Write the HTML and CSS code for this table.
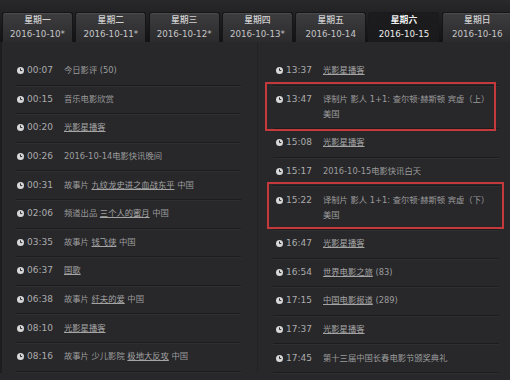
FILE: index.html
```html
<!DOCTYPE html>
<html>
<head>
<meta charset="utf-8">
<link rel="stylesheet" href="styles.css">
</head>
<body>
<div class="page">
  <div class="tabs">
    <div class="tab"><span class="wd">星期一</span><span class="dt">2016-10-10*</span></div>
    <div class="tab"><span class="wd">星期二</span><span class="dt">2016-10-11*</span></div>
    <div class="tab"><span class="wd">星期三</span><span class="dt">2016-10-12*</span></div>
    <div class="tab"><span class="wd">星期四</span><span class="dt">2016-10-13*</span></div>
    <div class="tab"><span class="wd">星期五</span><span class="dt">2016-10-14</span></div>
    <div class="tab active"><span class="wd">星期六</span><span class="dt">2016-10-15</span></div>
    <div class="tab"><span class="wd">星期日</span><span class="dt">2016-10-16</span></div>
  </div>
  <div class="content">
    <div class="col left">
      <div class="row"><svg class="ico" viewBox="0 0 7 7"><circle cx="3.5" cy="3.5" r="3.5"/><path d="M3.5 1.4V3.6H5.3"/></svg><span class="time">00:07</span><span class="title">今日影评 (50)</span></div>
      <div class="row"><svg class="ico" viewBox="0 0 7 7"><circle cx="3.5" cy="3.5" r="3.5"/><path d="M3.5 1.4V3.6H5.3"/></svg><span class="time">00:15</span><span class="title">音乐电影欣赏</span></div>
      <div class="row"><svg class="ico" viewBox="0 0 7 7"><circle cx="3.5" cy="3.5" r="3.5"/><path d="M3.5 1.4V3.6H5.3"/></svg><span class="time">00:20</span><span class="title"><a class="lk">光影星播客</a></span></div>
      <div class="row"><svg class="ico" viewBox="0 0 7 7"><circle cx="3.5" cy="3.5" r="3.5"/><path d="M3.5 1.4V3.6H5.3"/></svg><span class="time">00:26</span><span class="title">2016-10-14电影快讯晚间</span></div>
      <div class="row"><svg class="ico" viewBox="0 0 7 7"><circle cx="3.5" cy="3.5" r="3.5"/><path d="M3.5 1.4V3.6H5.3"/></svg><span class="time">00:31</span><span class="title">故事片 <a class="lk">九纹龙史进之血战东平</a> 中国</span></div>
      <div class="row"><svg class="ico" viewBox="0 0 7 7"><circle cx="3.5" cy="3.5" r="3.5"/><path d="M3.5 1.4V3.6H5.3"/></svg><span class="time">02:06</span><span class="title">频道出品 <a class="lk">三个人的蜜月</a> 中国</span></div>
      <div class="row"><svg class="ico" viewBox="0 0 7 7"><circle cx="3.5" cy="3.5" r="3.5"/><path d="M3.5 1.4V3.6H5.3"/></svg><span class="time">03:35</span><span class="title">故事片 <a class="lk">钱飞侠</a> 中国</span></div>
      <div class="row"><svg class="ico" viewBox="0 0 7 7"><circle cx="3.5" cy="3.5" r="3.5"/><path d="M3.5 1.4V3.6H5.3"/></svg><span class="time">06:37</span><span class="title"><a class="lk">国歌</a></span></div>
      <div class="row"><svg class="ico" viewBox="0 0 7 7"><circle cx="3.5" cy="3.5" r="3.5"/><path d="M3.5 1.4V3.6H5.3"/></svg><span class="time">06:38</span><span class="title">故事片 <a class="lk">纤夫的爱</a> 中国</span></div>
      <div class="row"><svg class="ico" viewBox="0 0 7 7"><circle cx="3.5" cy="3.5" r="3.5"/><path d="M3.5 1.4V3.6H5.3"/></svg><span class="time">08:10</span><span class="title"><a class="lk">光影星播客</a></span></div>
      <div class="row"><svg class="ico" viewBox="0 0 7 7"><circle cx="3.5" cy="3.5" r="3.5"/><path d="M3.5 1.4V3.6H5.3"/></svg><span class="time">08:16</span><span class="title">故事片 少儿影院 <a class="lk">极地大反攻</a> 中国</span></div>
    </div>
    <div class="col right">
      <div class="row"><svg class="ico" viewBox="0 0 7 7"><circle cx="3.5" cy="3.5" r="3.5"/><path d="M3.5 1.4V3.6H5.3"/></svg><span class="time">13:37</span><span class="title"><a class="lk">光影星播客</a></span></div>
      <div class="row"><svg class="ico" viewBox="0 0 7 7"><circle cx="3.5" cy="3.5" r="3.5"/><path d="M3.5 1.4V3.6H5.3"/></svg><span class="time">13:47</span><span class="title">译制片 影人 1+1: 查尔顿·赫斯顿 宾虚（上）<br>美国</span><span class="mark mark1"></span></div>
      <div class="row"><svg class="ico" viewBox="0 0 7 7"><circle cx="3.5" cy="3.5" r="3.5"/><path d="M3.5 1.4V3.6H5.3"/></svg><span class="time">15:08</span><span class="title"><a class="lk">光影星播客</a></span></div>
      <div class="row"><svg class="ico" viewBox="0 0 7 7"><circle cx="3.5" cy="3.5" r="3.5"/><path d="M3.5 1.4V3.6H5.3"/></svg><span class="time">15:17</span><span class="title">2016-10-15电影快讯白天</span></div>
      <div class="row"><svg class="ico" viewBox="0 0 7 7"><circle cx="3.5" cy="3.5" r="3.5"/><path d="M3.5 1.4V3.6H5.3"/></svg><span class="time">15:22</span><span class="title">译制片 影人 1+1: 查尔顿·赫斯顿 宾虚（下）<br>美国</span><span class="mark mark2"></span></div>
      <div class="row"><svg class="ico" viewBox="0 0 7 7"><circle cx="3.5" cy="3.5" r="3.5"/><path d="M3.5 1.4V3.6H5.3"/></svg><span class="time">16:47</span><span class="title"><a class="lk">光影星播客</a></span></div>
      <div class="row"><svg class="ico" viewBox="0 0 7 7"><circle cx="3.5" cy="3.5" r="3.5"/><path d="M3.5 1.4V3.6H5.3"/></svg><span class="time">16:54</span><span class="title"><a class="lk">世界电影之旅</a> (83)</span></div>
      <div class="row"><svg class="ico" viewBox="0 0 7 7"><circle cx="3.5" cy="3.5" r="3.5"/><path d="M3.5 1.4V3.6H5.3"/></svg><span class="time">17:15</span><span class="title"><a class="lk">中国电影报道</a> (289)</span></div>
      <div class="row"><svg class="ico" viewBox="0 0 7 7"><circle cx="3.5" cy="3.5" r="3.5"/><path d="M3.5 1.4V3.6H5.3"/></svg><span class="time">17:37</span><span class="title"><a class="lk">光影星播客</a></span></div>
      <div class="row"><svg class="ico" viewBox="0 0 7 7"><circle cx="3.5" cy="3.5" r="3.5"/><path d="M3.5 1.4V3.6H5.3"/></svg><span class="time">17:45</span><span class="title">第十三届中国长春电影节颁奖典礼</span></div>
    </div>
  </div>
</div>
</body>
</html>
```
FILE: styles.css
```css
html, body {
  margin: 0;
  padding: 0;
  background: #28282b;
}
.page {
  width: 510px;
  height: 380px;
  overflow: hidden;
  font-family: "DejaVu Sans", "Noto Sans CJK SC", sans-serif;
  font-size: 9px;
  color: #a2a2a2;
}
.tabs {
  height: 42px;
  box-sizing: border-box;
  display: flex;
  align-items: flex-end;
  gap: 2.3px;
  padding-left: 2px;
  background: linear-gradient(#29292b, #121214);
}
.tab {
  flex: 0 0 71px;
  height: 30px;
  box-sizing: border-box;
  display: flex;
  flex-direction: column;
  align-items: center;
  padding-top: 1px;
  line-height: 13.5px;
  border-radius: 3px 3px 0 0;
  background: linear-gradient(#3d3d40, #2b2b2e);
  border: 1px solid #151517;
  border-bottom: none;
  box-shadow: inset 0 1px 0 #4a4a4d;
}
.tab .wd {
  color: #d0d0d0;
  font-weight: 500;
  font-size: 8.8px;
}
.tab .dt {
  color: #c6c6c6;
  font-size: 8.7px;
}
.tab.active {
  background: linear-gradient(#1c1c1e, #1a1a1c);
  border-color: #1a1a1c;
  box-shadow: none;
}
.tab.active .wd {
  color: #f0f0f0;
  font-weight: bold;
}
.tab.active .dt {
  color: #ececec;
}
.content {
  display: grid;
  grid-template-columns: 256px 254px;
  border-left: 2px solid #1d1d1f;
}
.col {
  padding-top: 15px;
}
.col.left {
  padding-left: 14px;
  padding-right: 16px;
  border-right: 1px solid #222225;
}
.col.right {
  padding-left: 15px;
  padding-right: 13px;
}
.row {
  position: relative;
  display: flex;
  align-items: flex-start;
  padding: 6.3px 0;
  line-height: 15px;
  border-bottom: 1px solid #1c1c1e;
  box-shadow: 0 1px 0 #2f2f32;
  white-space: nowrap;
}
.left .row { padding-left: 1px; }
.right .row { padding-left: 3px; }
.ico {
  flex: 0 0 7px;
  width: 7px;
  height: 7px;
  margin-top: 4px;
  margin-right: 3px;
}
.ico circle { fill: #d8d8d8; }
.ico path {
  fill: none;
  stroke: #2a2a2c;
  stroke-width: 1;
}
.time {
  flex: 0 0 37px;
  color: #ababab;
}
.title {
  color: #9c9c9c;
  font-size: 8.3px;
}
.lk {
  color: #a4a4a4;
  text-decoration: underline;
}
.mark {
  position: absolute;
  border: 2px solid #c4393b;
  pointer-events: none;
}
.mark1 {
  left: -8px;
  top: -3.3px;
  right: 2.7px;
  bottom: -2.5px;
}
.mark2 {
  left: -6px;
  top: -4px;
  right: -5px;
  bottom: -0.5px;
}
```
